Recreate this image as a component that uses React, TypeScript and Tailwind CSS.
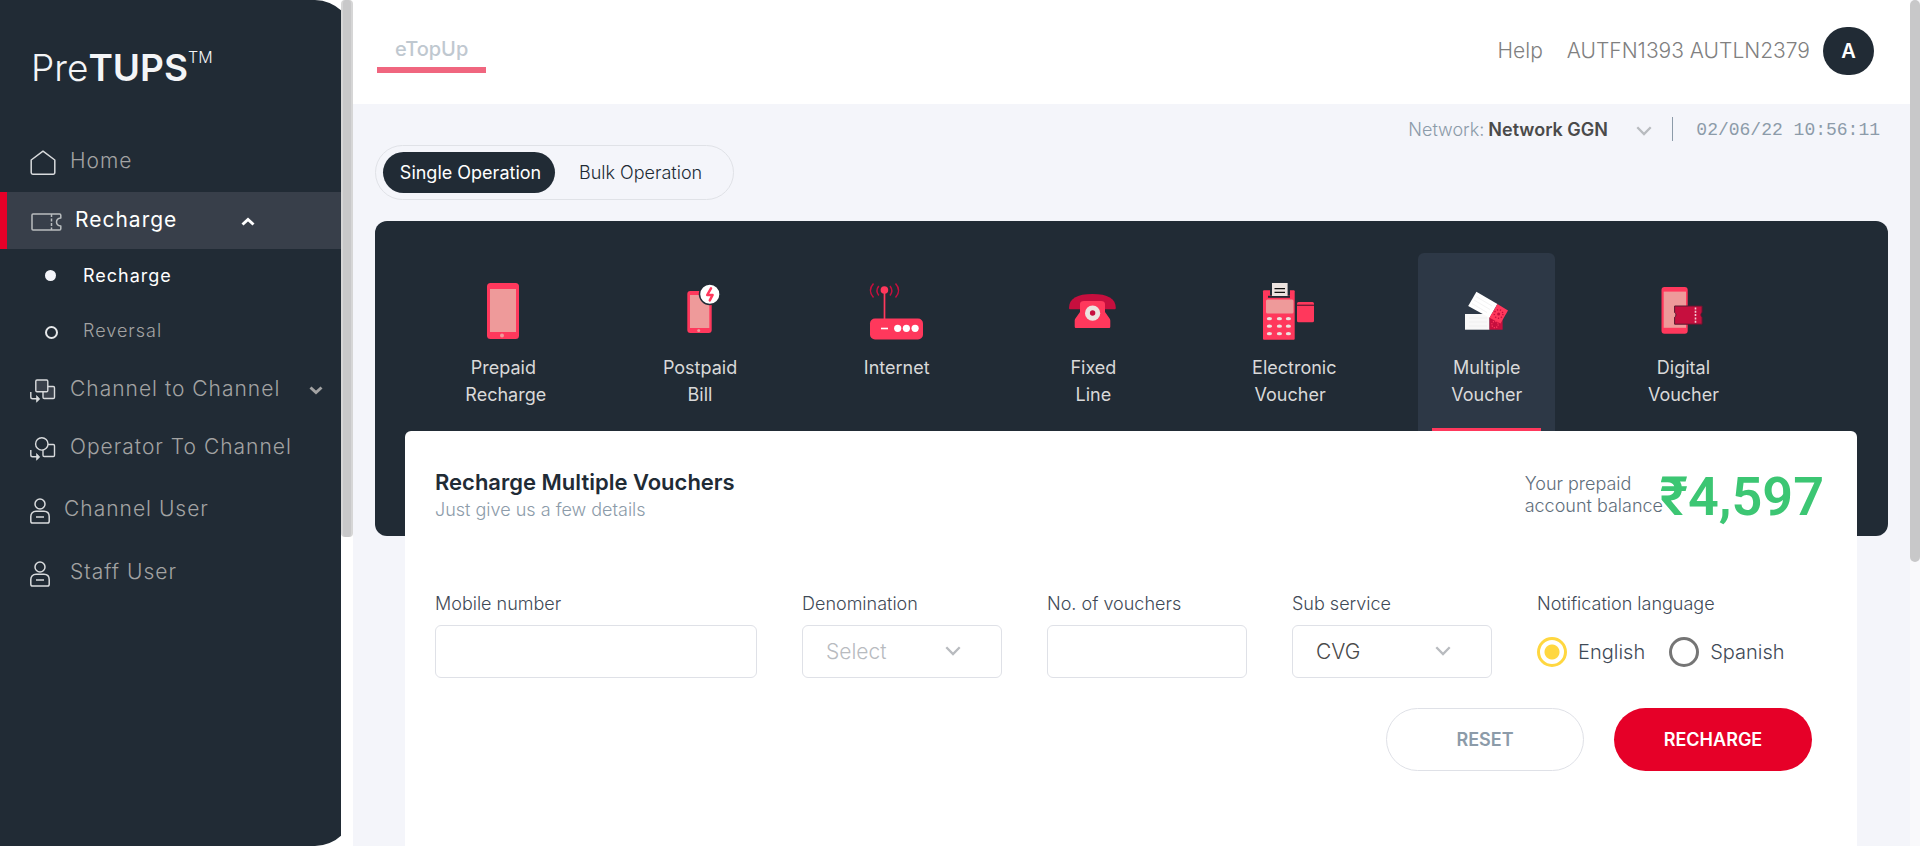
import React from "react";

const NAV_TEXT = "text-[21px] font-light tracking-[1px]";

function HomeIcon() {
  return (
    <svg className="mt-1" width="26" height="26" viewBox="0 0 26 26" fill="none" stroke="#d9dbdd" strokeWidth="1.5" strokeLinejoin="round">
      <path d="M1.2 10 13 1.2 24.8 10v12.6a1.6 1.6 0 0 1-1.6 1.6H2.8a1.6 1.6 0 0 1-1.6-1.6z" />
    </svg>
  );
}

function TicketIcon() {
  return (
    <svg className="mt-1" width="31" height="18" viewBox="0 0 31 18" fill="none" stroke="#b9bdbf" strokeWidth="1.5" strokeLinejoin="round">
      <path d="M2 1h26.500c.8 0 1.300.5 1.300 1.300V5c-2.600.3-4.300 1.900-4.300 4s1.700 3.700 4.300 4v2.700c0 .8-.5 1.300-1.300 1.300H2c-.7 0-1-.4-1-1V2c0-.6.3-1 1-1z" />
      <path d="M20.500 1v16" strokeDasharray="3 1.500" />
    </svg>
  );
}

function TransferIcon({ round }: { round?: boolean }) {
  return (
    <svg className="mt-1" width="26" height="24" viewBox="0 0 26 24" fill="none" stroke="#d9dbdd" strokeWidth="1.4" strokeLinejoin="round">
      <rect x="13" y="7.500" width="11.500" height="12" rx="1.200" fill={round ? "none" : "#3a414b"} />
      {round ? (
        <circle cx="11.800" cy="6.900" r="6.200" fill="#212b35" />
      ) : (
        <rect x="5.800" y="1" width="12" height="11.800" rx="1.200" fill="#3a414b" />
      )}
      <path d="M.8 13v5c0 1.200.6 1.800 1.800 1.800H7" />
      <path d="M6.500 16.500v6.800l3.300-3.400z" fill="#d9dbdd" strokeWidth=".6" />
    </svg>
  );
}

function UserIcon() {
  return (
    <svg className="mt-1" width="20" height="26" viewBox="0 0 20 26" fill="none" stroke="#d9dbdd" strokeWidth="1.500">
      <circle cx="10" cy="6" r="5" />
      <path d="M6 13.200h8c3.200 0 5.200 2.200 5.200 5.300v4.700c0 1.200-.6 1.800-1.800 1.800H2.600C1.400 25 .8 24.400.8 23.200v-4.700c0-3.100 2-5.300 5.200-5.300z" />
      <path d="M6 19h8" />
    </svg>
  );
}

function BoldChevron({ up }: { up?: boolean }) {
  return (
    <svg className="mt-1" width="14" height="9" viewBox="0 0 14 9" fill="none" stroke="currentColor" strokeWidth="3">
      <path d={up ? "M1.500 7.500 7 2.500l5.500 5" : "M1.500 1.500 7 6.500l5.500-5"} />
    </svg>
  );
}

function ThinChevron({ className }: { className: string }) {
  return (
    <svg className={className} width="16" height="10" viewBox="0 0 16 10" fill="none" stroke="#b8bbbf" strokeWidth="2.300">
      <path d="M1.300 1.300 8 8l6.700-6.700" />
    </svg>
  );
}

function Drawing({ children }: { children: React.ReactNode }) {
  return (
    <svg width="76" height="66" viewBox="0 0 76 66" fill="none" aria-hidden="true">
      {children}
    </svg>
  );
}

const prepaid = (
  <Drawing>
    <rect x="22" y="5" width="32" height="56" rx="3.500" fill="#ff385c" />
    <rect x="25" y="11" width="26" height="43" fill="#ee9a9a" />
    <circle cx="37" cy="57.400" r="2" fill="#ee9a9a" />
  </Drawing>
);

const postpaid = (
  <Drawing>
    <rect x="25.300" y="13" width="24.400" height="42" rx="3" fill="#ff385c" />
    <rect x="28" y="17" width="19.300" height="33" fill="#ee9a9a" />
    <circle cx="36.700" cy="52.600" r="1.500" fill="#ee9a9a" />
    <circle cx="47.800" cy="16.300" r="10.300" fill="#fff" stroke="#212b35" strokeWidth="1.500" />
    <path d="M49 10.400 45.200 17h5.400L47.800 22.400" stroke="#ff385c" strokeWidth="2.500" strokeLinecap="round" strokeLinejoin="round" />
  </Drawing>
);

const internet = (
  <Drawing>
    <path d="M14.500 5.500c-4 4.500-4 9.500 0 14M36.500 5.500c4 4.500 4 9.500 0 14M19.800 8c-2.300 3-2.300 6.500 0 9.500M31 8c2.300 3 2.300 6.500 0 9.500" stroke="#c60f3e" strokeWidth="1.500" />
    <path d="M25.500 12v29" stroke="#ff385c" strokeWidth="1.700" />
    <circle cx="25.400" cy="12" r="3.800" fill="#ff385c" />
    <rect x="11" y="40.500" width="53" height="21" rx="5" fill="#ff385c" />
    <path d="M22 50.500h7" stroke="#fff" strokeWidth="1.600" />
    <circle cx="38.700" cy="50.300" r="3.600" fill="#fff" />
    <circle cx="47.400" cy="50.300" r="3.600" fill="#fff" />
    <circle cx="56.100" cy="50.300" r="3.600" fill="#fff" />
  </Drawing>
);

const fixedLine = (
  <Drawing>
    <path d="M14 30c0-9.500 8-14 23.400-14s23.400 4.500 23.400 14c0 .9-.5 1.300-1.300 1.300H15.300c-.8 0-1.300-.4-1.300-1.300z" fill="#c60f3e" />
    <path d="M25 26c0-2 1.500-3 4-3h17c2.500 0 4 1 4 3v8l4.600 6.500c.6 1 .7 1.500.7 2.500v5.500c0 1-.5 1.500-1.500 1.500H21.200c-1 0-1.500-.5-1.500-1.500V43c0-1 .1-1.500.7-2.500L25 34z" fill="#ff385c" />
    <circle cx="37.600" cy="35.200" r="7.600" fill="#ece3df" />
    <circle cx="37.600" cy="35" r="2.700" fill="#c60f3e" />
  </Drawing>
);

const electronic = (
  <Drawing>
    <rect x="11" y="12.300" width="31.700" height="49.400" rx="1" fill="#ff385c" />
    <path d="M18 12h20v5.500H18z" fill="#212b35" />
    <path d="M16 18.800h22" stroke="#212b35" strokeWidth="2" />
    <rect x="20" y="5" width="15.600" height="13" fill="#ece3df" />
    <path d="M22.500 10.700h10.500M22.500 14.300h10.500" stroke="#111" strokeWidth="1.200" />
    <rect x="14" y="21.400" width="27.500" height="14" rx="1.500" fill="#ee9a9a" />
    {[40.7, 48.2, 55.7].map((y) =>
      [17.4, 27.4, 36.4].map((x) => <ellipse key={`${x}-${y}`} cx={x} cy={y} rx="2.600" ry="1.600" fill="#ece3df" />),
    )}
    <rect x="45" y="24" width="17" height="20.300" rx="1.500" fill="#ff385c" />
    <path d="M45 27.300h17" stroke="#741c36" strokeWidth="1.400" />
  </Drawing>
);

const multiple = (
  <Drawing>
    <path d="M16 36h24.500v15.700H16z" fill="#f8f8f8" />
    <path d="M40.500 36h13.100v15.700H40.500z" fill="#c60f3e" />
    <path d="M20 40h18M20 44h18M20 48h18" stroke="#eeeeee" strokeWidth=".8" />
    <circle cx="46" cy="46.500" r="3.200" stroke="#ff385c" strokeWidth="1.200" strokeDasharray="1.200 1.300" />
    <path d="m27.400 13.700 21 12.300-7.900 13.700L19.200 28z" fill="#fff" />
    <path d="m48.400 26 10.600 6.500-7.500 13-11-5.800z" fill="#ff385c" />
    <path d="m27 18.500 16 9.500M25 22l16 9.500M23 25.500l15 9" stroke="#f0f0f0" strokeWidth=".8" />
    <circle cx="49.600" cy="36" r="1.500" fill="#c60f3e" />
    <circle cx="49.600" cy="36" r="4.300" stroke="#c60f3e" strokeWidth="1.400" strokeDasharray="1.300 1.700" />
  </Drawing>
);

const digital = (
  <Drawing>
    <rect x="16.500" y="9" width="26.200" height="46.700" rx="3" fill="#ff385c" />
    <rect x="18.700" y="13.600" width="22.300" height="36.200" fill="#ee9a9a" />
    <path d="M29.600 28h27.500v6.600c-1.600.4-1.600 4.200 0 4.600v7H29.600v-7c1.800-.4 1.800-4.200 0-4.600z" fill="#c60f3e" stroke="#5a1a30" strokeWidth="1" />
    <path d="M50.500 29.500V45" stroke="#f3c9d2" strokeWidth="1.600" strokeDasharray="2 1.300" />
  </Drawing>
);

const services = [
  { first: "Prepaid", second: "Recharge", art: prepaid },
  { first: "Postpaid", second: "Bill", art: postpaid },
  { first: "Internet", second: "", art: internet },
  { first: "Fixed", second: "Line", art: fixedLine },
  { first: "Electronic", second: "Voucher", art: electronic },
  { first: "Multiple", second: "Voucher", art: multiple, active: true },
  { first: "Digital", second: "Voucher", art: digital },
];

function Sidebar() {
  return (
    <aside className="flex shrink-0 bg-white">
      <div className="w-[341px] overflow-hidden">
        <div className="h-full w-[353px] rounded-r-[38px] bg-[#212b35] text-[#a3a3a3]">
          <a href="#" className="flex h-[130px] items-start pl-[31px] pt-[44px] leading-[48px] text-[#f4f5f7]">
            <span className="text-[37px] font-light">Pre</span>
            <span className="text-[37px] font-semibold">TUPS</span>
            <span className="text-[16px] font-light leading-[26px]">TM</span>
          </a>
          <nav>
            <a href="#" className={`flex h-[62px] items-center gap-[14px] pl-[30px] ${NAV_TEXT}`}>
              <HomeIcon />
              Home
            </a>
            <a href="#" className="flex h-[57px] items-center border-l-[7px] border-[#e60028] bg-[#383f4a] pb-[2px] pl-[24px] text-[21px] tracking-[1px] text-white">
              <TicketIcon />
              <span className="w-[179px] pl-[13px]">Recharge</span>
              <BoldChevron up />
            </a>
            <a href="#" className="flex h-[55px] items-center gap-[27px] pb-[2px] pl-[45px] text-[18px] tracking-[1px] text-white">
              <span className="size-[11px] rounded-full bg-[#f4f5fa]" />
              Recharge
            </a>
            <a href="#" className="flex h-[55px] items-center gap-[25px] pb-[2px] pl-[45px] text-[18px] font-light tracking-[1px]">
              <span className="mt-1 size-[13px] rounded-full border-2 border-[#e6e8ea]" />
              Reversal
            </a>
            <a href="#" className={`flex h-[59px] items-center gap-[14px] pl-[30px] ${NAV_TEXT}`}>
              <TransferIcon />
              <span className="w-[225px]">Channel to Channel</span>
              <BoldChevron />
            </a>
            <a href="#" className={`flex h-[58px] items-center gap-[14px] pl-[30px] ${NAV_TEXT}`}>
              <TransferIcon round />
              Operator To Channel
            </a>
            <a href="#" className={`flex h-[65px] items-center gap-[14px] pl-[30px] ${NAV_TEXT}`}>
              <UserIcon />
              Channel User
            </a>
            <a href="#" className={`flex h-[62px] items-center gap-5 pl-[30px] ${NAV_TEXT}`}>
              <UserIcon />
              Staff User
            </a>
          </nav>
        </div>
      </div>
      <div className="w-3" aria-hidden="true">
        <div className="h-[537px] rounded-[4px] border-x-2 border-[#d6d6d6] bg-[#c8c8c9]" />
      </div>
    </aside>
  );
}

const LABEL = "block text-[18px] font-light leading-[26px] text-[#3f4a57]";
const FIELD = "mt-2 h-[53px] w-full rounded-md border border-[#dfe1e7] bg-white text-[21px] font-light outline-none";
const RADIO =
  "size-[30px] appearance-none rounded-full border-[3px] border-[#757575] checked:border-[#ffd740] checked:bg-[radial-gradient(circle,#ffd740_7px,transparent_8px)]";

export default function App() {
  return (
    <div className="flex h-screen overflow-hidden bg-[#f4f5fa] font-['Inter',sans-serif] text-[#212b35]">
      <Sidebar />

      <main className="min-w-0 flex-1">
        <header className="flex h-[104px] items-center justify-between bg-white pb-[2px] pl-6 pr-9">
          <a href="#" className="mt-[6px] border-b-[6px] border-[#f0667f] px-[18px] pb-1 text-[20px] font-medium leading-7 text-[#bfc8d0]">
            eTopUp
          </a>
          <div className="flex items-center text-[21px] font-light text-[#808080]">
            <a href="#" className="mr-6">Help</a>
            <span className="mr-[13px]">AUTFN1393 AUTLN2379</span>
            <span className="flex h-12 w-[51px] items-center justify-center rounded-full bg-[#212b35] text-[20px] font-semibold text-white">A</span>
          </div>
        </header>

        <div className="flex items-start justify-between pl-[22px] pr-[30px]">
          <div className="mt-[41px] flex h-[55px] items-center rounded-full border border-[#e0e2e7] pl-[7px] pr-[31px] text-[18px]">
            <button type="button" className="h-[41px] w-[172px] whitespace-nowrap rounded-full bg-[#212b35] pl-[3px] text-white">
              Single Operation
            </button>
            <button type="button" className="ml-6 h-[41px] whitespace-nowrap font-light">Bulk Operation</button>
          </div>
          <div className="mt-[13px] flex h-6 items-center text-[18px]">
            <label htmlFor="network" className="mr-1 font-light text-[#8c9ba9]">Network:</label>
            <div className="relative">
              <select id="network" defaultValue="ggn" className="w-[168px] appearance-none font-semibold text-[#4a4a4a] outline-none">
                <option value="ggn">Network GGN</option>
              </select>
              <ThinChevron className="pointer-events-none absolute right-[4px] top-[10px]" />
            </div>
            <span className="ml-4 h-6 border-l border-[#8c9ba9]" />
            <time className="ml-[23px] pt-[2px] font-['Liberation_Mono',monospace] text-[#8c9ba9]">02/06/22 10:56:11</time>
          </div>
        </div>

        <section className="mx-[22px] mt-[21px] h-[315px] rounded-xl bg-[#212b35] pt-8">
          <ul className="flex">
            {services.map((s) => (
              <li key={s.first} className="w-[13%] shrink-0 px-[30px] first:ml-[30px]">
                <button
                  type="button"
                  className={
                    s.active
                      ? "relative flex h-[178px] w-full flex-col items-center rounded-t-md bg-[#2d3846] pt-[25px]"
                      : "flex h-[178px] w-full flex-col items-center pt-[25px]"
                  }
                >
                  {s.art}
                  <span className="mt-[10px] w-[76px] text-[18px] leading-[27px] text-[#d9d9d9]">
                    {s.first}
                    <br />
                    {s.second}
                  </span>
                  {s.active && <span className="absolute inset-x-[14px] bottom-0 h-[3px] bg-[#ff385c]" />}
                </button>
              </li>
            ))}
          </ul>
        </section>

        <form className="relative -mt-[105px] ml-[52px] mr-[53px] h-full rounded-md bg-white pl-[30px] pr-[45px] pt-[37px]">
          <div className="flex items-start justify-between">
            <div>
              <h1 className="text-[22px] font-semibold leading-7">Recharge Multiple Vouchers</h1>
              <p className="text-[18px] font-light leading-7 text-[#8c9ba9]">Just give us a few details</p>
            </div>
            <div className="-mr-3 flex items-start">
              <p className="mt-[5px] w-[135px] whitespace-nowrap text-[18px] font-light leading-[22px] text-[#5f6e7b]">
                Your prepaid
                <br />
                account balance
              </p>
              <p className="font-['Roboto',sans-serif] text-[54px] font-semibold leading-[58px] text-[#3cc673]">₹4,597</p>
            </div>
          </div>

          <div className="mt-[65px] flex gap-[45px]">
            <div className="w-[322px]">
              <label htmlFor="mobile" className={LABEL}>Mobile number</label>
              <input id="mobile" className={`${FIELD} px-6`} />
            </div>
            <div className="w-[200px]">
              <label htmlFor="denomination" className={LABEL}>Denomination</label>
              <div className="relative">
                <select id="denomination" className={`${FIELD} appearance-none px-[23px] text-[#b8bbbf]`}>
                  <option>Select</option>
                </select>
                <ThinChevron className="pointer-events-none absolute right-[41px] top-[29px]" />
              </div>
            </div>
            <div className="w-[200px]">
              <label htmlFor="vouchers" className={LABEL}>No. of vouchers</label>
              <input id="vouchers" className={`${FIELD} px-6`} />
            </div>
            <div className="w-[200px]">
              <label htmlFor="subservice" className={LABEL}>Sub service</label>
              <div className="relative">
                <select id="subservice" className={`${FIELD} appearance-none px-[23px] text-[#4a4a4a]`}>
                  <option>CVG</option>
                </select>
                <ThinChevron className="pointer-events-none absolute right-[41px] top-[29px]" />
              </div>
            </div>
            <fieldset>
              <legend className={LABEL}>Notification language</legend>
              <div className="mt-5 flex items-center text-[20px] font-light text-[#3f4a57]">
                <input id="english" type="radio" name="language" defaultChecked className={RADIO} />
                <label htmlFor="english" className="ml-[11px] mr-6">English</label>
                <input id="spanish" type="radio" name="language" className={RADIO} />
                <label htmlFor="spanish" className="ml-[11px]">Spanish</label>
              </div>
            </fieldset>
          </div>

          <div className="mt-[30px] flex justify-end gap-[30px] text-[18px] font-semibold">
            <button type="reset" className="h-[63px] w-[198px] rounded-full border border-[#dfe1e7] text-[#8c9ba9]">RESET</button>
            <button type="submit" className="h-[63px] w-[198px] rounded-full bg-[#e60028] text-white">RECHARGE</button>
          </div>
        </form>
      </main>

      <div className="w-[10px] shrink-0 bg-[#f9f9fb]" aria-hidden="true">
        <div className="h-[562px] rounded-full bg-[#c8c8c9]" />
      </div>
    </div>
  );
}
